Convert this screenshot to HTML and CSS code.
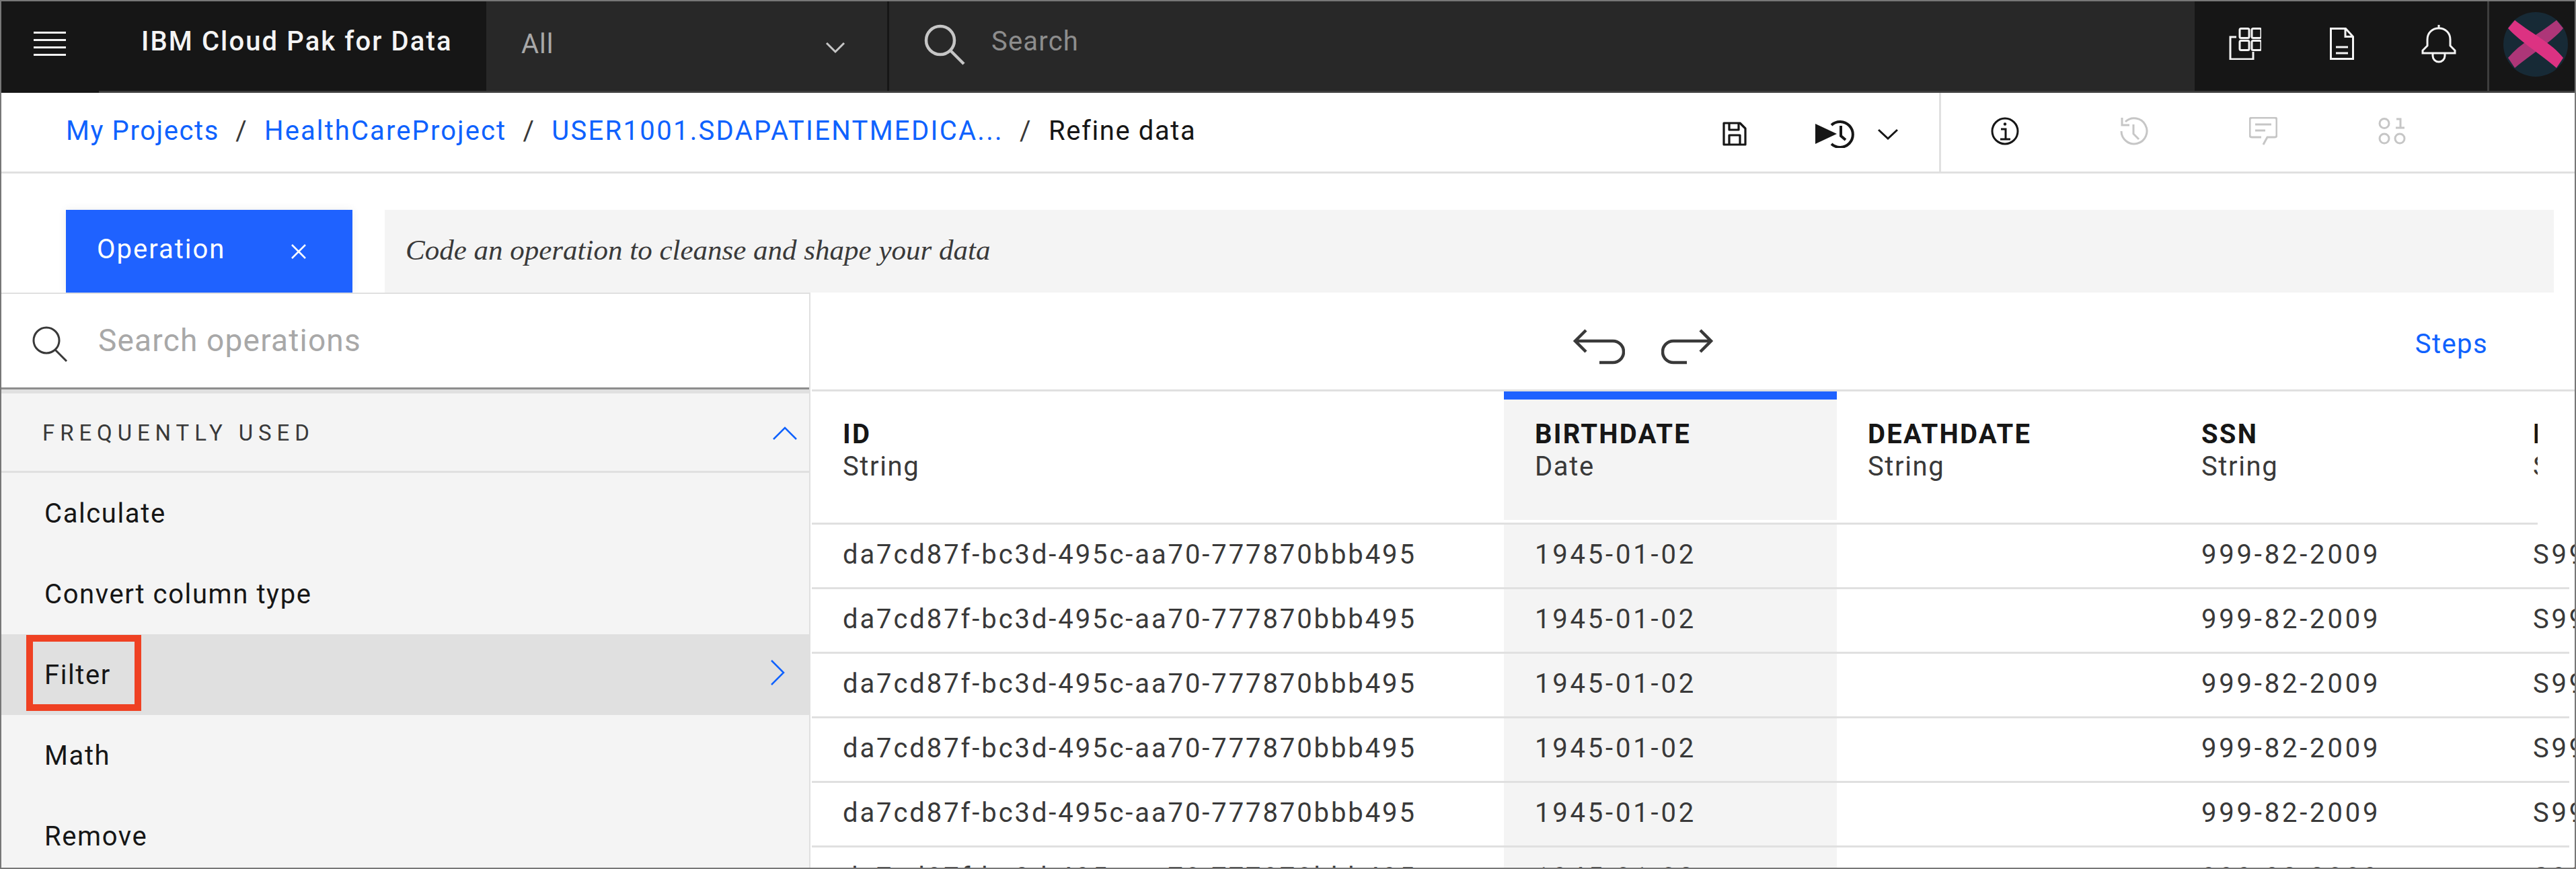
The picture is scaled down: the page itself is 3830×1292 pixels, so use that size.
FILE: index.html

```html
<!DOCTYPE html>
<html lang="en">
<head>
  <meta charset="UTF-8">
  <title>Refine data - IBM Cloud Pak for Data</title>
  <link rel="stylesheet" href="styles.css">
</head>
<body>
<div class="page">

  <header class="topbar">
    <div class="menu-cell">
      <div class="hamburger"><span></span><span></span><span></span><span></span></div>
    </div>
    <div class="brand">IBM Cloud Pak for Data</div>
    <div class="scope">
      <span class="scope-label">All</span>
      <svg class="scope-chevron" width="30" height="18" viewBox="0 0 30 18"><path d="M2 2l13 13L28 2" fill="none" stroke="#c6c6c6" stroke-width="3"/></svg>
    </div>
    <div class="global-search">
      <svg width="62" height="62" viewBox="0 0 62 62"><circle cx="25" cy="25" r="21" fill="none" stroke="#c6c6c6" stroke-width="4.5"/><path d="M40 40l20 20" stroke="#c6c6c6" stroke-width="4.5"/></svg>
      <span class="global-search-text">Search</span>
    </div>
    <div class="tools">
      <svg class="tool-apps" width="48" height="48" viewBox="0 0 48 48" fill="none" stroke="#f4f4f4" stroke-width="3">
        <path d="M11 14H2v33h34v-11"/>
        <rect x="16" y="1.500" width="14" height="14" rx="2"/><rect x="34" y="1.500" width="14" height="14" rx="2"/>
        <rect x="16" y="19.500" width="14" height="14" rx="2"/><rect x="34" y="19.500" width="14" height="14" rx="2"/>
      </svg>
      <svg class="tool-doc" width="36" height="48" viewBox="0 0 36 48" fill="none" stroke="#f4f4f4" stroke-width="3">
        <path d="M1.500 1.500h22l11 12v33h-33zM23 2v11.500h11"/>
        <path d="M9 29h18M9 38h18"/>
      </svg>
      <svg class="tool-bell" width="52" height="57" viewBox="0 0 52 57" fill="none" stroke="#f4f4f4" stroke-width="3">
        <path d="M26 0v5"/>
        <path d="M2 42v-4l7-7V22c0-10 7-17 17-17s17 7 17 17v9l7 7v4z"/>
        <path d="M17 43v3c0 5 4 9 9 9s9-4 9-9v-3"/>
      </svg>
    </div>
    <div class="avatar-cell">
      <svg width="96" height="96" viewBox="0 0 96 96">
        <circle cx="48" cy="48" r="48" fill="#172a36"/>
        <path d="M79 12l10 12C72 44 50 56 17 83L7 68c18-22 44-34 72-56z" fill="#ad3678"/>
        <path d="M17 12L7 24c18 20 40 32 72 59l10-15C72 46 45 34 17 12z" fill="#dc3282"/>
      </svg>
    </div>
  </header>

  <nav class="crumbbar">
    <div class="crumbs">
      <a class="crumb crumb-first">My Projects</a><span class="crumb-sep">/</span>
      <a class="crumb">HealthCareProject</a><span class="crumb-sep">/</span>
      <a class="crumb crumb-long">USER1001.SDAPATIENTMEDICA...</a><span class="crumb-sep">/</span>
      <span class="crumb-current">Refine data</span>
    </div>
    <div class="crumb-actions">
      <svg width="36" height="36" viewBox="0 0 36 36" fill="none" stroke="#161616" stroke-width="3.200" stroke-linejoin="round">
        <path d="M2 2h24l8 8v24H2z"/>
        <path d="M10 2v10h14V2M10 34V20h16v14"/>
      </svg>
      <svg class="run-icon" width="62" height="42" viewBox="0 0 62 42">
        <path d="M0 6l32 15L0 36z" fill="#161616"/>
        <path d="M24 8a19 19 0 1 1 0 28" fill="none" stroke="#161616" stroke-width="4"/>
        <path d="M38 9v15l7 6" fill="none" stroke="#161616" stroke-width="4"/>
      </svg>
      <svg class="run-chevron" width="30" height="18" viewBox="0 0 30 18"><path d="M1 2l14 13L29 2" fill="none" stroke="#161616" stroke-width="3"/></svg>
    </div>
    <div class="crumb-panel">
      <svg width="42" height="42" viewBox="0 0 42 42" fill="none" stroke="#161616" stroke-width="3">
        <circle cx="21" cy="21" r="19"/>
        <circle cx="21" cy="10.500" r="2.200" fill="#161616" stroke="none"/>
        <path d="M15 18h7v14M14 33h15"/>
      </svg>
      <svg width="42" height="42" viewBox="0 0 42 42" fill="none" stroke="#c6c6c6" stroke-width="3">
        <path d="M8 7a19 19 0 1 1-6 14"/>
        <path d="M3 1v11h11"/>
        <path d="M20 11v14l8 8"/>
      </svg>
      <svg width="42" height="42" viewBox="0 0 42 42" fill="none" stroke="#c6c6c6" stroke-width="3">
        <path d="M18 30H4q-3 0-3-3V4q0-3 3-3h34q3 0 3 3v23q0 3-3 3H27l-6 11"/>
        <path d="M9 11h24M9 20h15"/>
      </svg>
      <svg width="42" height="42" viewBox="0 0 42 42" fill="none" stroke="#c6c6c6" stroke-width="3">
        <circle cx="9" cy="9.500" r="7"/>
        <path d="M27 3h6v13M26 16h13"/>
        <circle cx="9" cy="32" r="7"/>
        <circle cx="32" cy="32" r="7"/>
      </svg>
    </div>
  </nav>

  <section class="opbar">
    <div class="op-button">
      <span class="op-label">Operation</span>
      <svg width="24" height="24" viewBox="0 0 24 24"><path d="M2 2l20 20M22 2L2 22" stroke="#fff" stroke-width="2.500"/></svg>
    </div>
    <div class="op-code">Code an operation to cleanse and shape your data</div>
  </section>

  <main class="workspace">
    <aside class="ops-panel">
      <div class="ops-search">
        <svg width="54" height="54" viewBox="0 0 54 54"><circle cx="22" cy="22" r="19" fill="none" stroke="#393939" stroke-width="3"/><path d="M35 36l17 17" stroke="#393939" stroke-width="3"/></svg>
        <span class="ops-search-text">Search operations</span>
      </div>
      <div class="ops-heading">
        <span>FREQUENTLY USED</span>
        <svg width="36" height="22" viewBox="0 0 36 22"><path d="M1 20L18 3l17 17" fill="none" stroke="#0f62fe" stroke-width="2.500"/></svg>
      </div>
      <div class="ops-item">Calculate</div>
      <div class="ops-item">Convert column type</div>
      <div class="ops-item ops-item-active">
        <span class="ops-marker">Filter</span>
        <svg class="ops-arrow" width="22" height="38" viewBox="0 0 22 38"><path d="M2 1l18 18L2 37" fill="none" stroke="#0f62fe" stroke-width="2.500"/></svg>
      </div>
      <div class="ops-item">Math</div>
      <div class="ops-item">Remove</div>
    </aside>

    <div class="data-pane">
      <div class="data-toolbar">
        <svg width="78" height="54" viewBox="0 0 78 54" fill="none" stroke="#393939" stroke-width="4.500">
          <path d="M20 3L4 19l16 16"/>
          <path d="M4 19h56a15 15 0 0 1 0 32H40"/>
        </svg>
        <svg class="redo" width="78" height="54" viewBox="0 0 78 54" fill="none" stroke="#393939" stroke-width="4.500">
          <path d="M58 3l16 16-16 16"/>
          <path d="M74 19H18a15 15 0 0 0 0 32h20"/>
        </svg>
        <a class="steps">Steps</a>
      </div>

      <div class="data-head cols">
        <div class="head-cell"><b>ID</b><span>String</span></div>
        <div class="head-cell head-cell-selected"><b>BIRTHDATE</b><span>Date</span></div>
        <div class="head-cell"><b>DEATHDATE</b><span>String</span></div>
        <div class="head-cell"><b>SSN</b><span>String</span></div>
        <div class="head-cell"><b>DRIVERS</b><span>String</span></div>
      </div>

      <div class="data-row cols"><div class="id-cell">da7cd87f-bc3d-495c-aa70-777870bbb495</div><div class="selected">1945-01-02</div><div></div><div>999-82-2009</div><div>S99962402</div></div>
      <div class="data-row cols"><div class="id-cell">da7cd87f-bc3d-495c-aa70-777870bbb495</div><div class="selected">1945-01-02</div><div></div><div>999-82-2009</div><div>S99962402</div></div>
      <div class="data-row cols"><div class="id-cell">da7cd87f-bc3d-495c-aa70-777870bbb495</div><div class="selected">1945-01-02</div><div></div><div>999-82-2009</div><div>S99962402</div></div>
      <div class="data-row cols"><div class="id-cell">da7cd87f-bc3d-495c-aa70-777870bbb495</div><div class="selected">1945-01-02</div><div></div><div>999-82-2009</div><div>S99962402</div></div>
      <div class="data-row cols"><div class="id-cell">da7cd87f-bc3d-495c-aa70-777870bbb495</div><div class="selected">1945-01-02</div><div></div><div>999-82-2009</div><div>S99962402</div></div>
      <div class="data-row cols"><div class="id-cell">da7cd87f-bc3d-495c-aa70-777870bbb495</div><div class="selected">1945-01-02</div><div></div><div>999-82-2009</div><div>S99962402</div></div>
    </div>
  </main>

</div>
</body>
</html>
```

FILE: styles.css

```css
* {
  box-sizing: border-box;
}
body {
  margin: 0;
  font-family: Roboto, "Noto Sans", sans-serif;
  color: #161616;
  background-color: #ffffff;
}
svg {
  display: block;
  flex: none;
}
.page {
  width: 3830px;
  height: 1292px;
  overflow: hidden;
  border: 2px solid #777777;
  display: flex;
  flex-direction: column;
}

/* top bar */
.topbar {
  height: 136px;
  flex: none;
  display: flex;
  background-color: #282828;
  border-bottom: 3px solid #3d3d3d;
}
.menu-cell {
  width: 145px;
  flex: none;
  margin-bottom: -3px;
  padding: 45px 0 0 48px;
  background-color: #161616;
}
.hamburger {
  width: 48px;
  display: flex;
  flex-direction: column;
  gap: 8px;
}
.hamburger span {
  height: 3px;
  background-color: #f4f4f4;
}
.brand {
  width: 576px;
  flex: none;
  padding: 36px 0 0 63px;
  background-color: #161616;
  color: #f4f4f4;
  font-size: 40px;
  line-height: 48px;
  font-weight: 500;
  letter-spacing: 2.1px;
  white-space: nowrap;
}
.scope {
  width: 599px;
  flex: none;
  padding: 40px 62px 0 52px;
  display: flex;
  justify-content: space-between;
  border-right: 3px solid #161616;
}
.scope-label {
  color: #a8a8a8;
  font-size: 40px;
  line-height: 48px;
  letter-spacing: 1px;
}
.scope-chevron {
  margin-top: 20px;
}
.global-search {
  flex: 1;
  min-width: 0;
  padding: 33px 0 0 51px;
  display: flex;
}
.global-search-text {
  margin: 3px 0 0 39px;
  color: #8d8d8d;
  font-size: 40px;
  line-height: 48px;
  letter-spacing: 1.2px;
}
.tools {
  width: 435px;
  flex: none;
  padding: 39px 0 0 51px;
  display: flex;
  align-items: flex-start;
  background-color: #161616;
}
.tool-doc {
  margin-left: 102px;
}
.tool-bell {
  margin: -4px 0 0 100px;
}
.avatar-cell {
  width: 130px;
  flex: none;
  padding: 16px 0 0 21px;
  background-color: #161616;
  border-left: 3px solid #3d3d3d;
}

/* breadcrumb bar */
.crumbbar {
  height: 120px;
  flex: none;
  display: flex;
  border-bottom: 3px solid #e0e0e0;
}
.crumbs {
  width: 2559px;
  padding: 33px 0 0 96px;
  display: flex;
  font-size: 40px;
  line-height: 48px;
  letter-spacing: 2.1px;
  white-space: nowrap;
}
.crumb {
  color: #0f62fe;
}
.crumb-first {
  letter-spacing: 1.6px;
}
.crumb-long {
  letter-spacing: 2.3px;
}
.crumb-sep {
  width: 67px;
  text-align: center;
  color: #393939;
}
.crumb-current {
  letter-spacing: 1.6px;
  color: #161616;
}
.crumb-actions {
  width: 325px;
  padding-top: 43px;
  display: flex;
  align-items: flex-start;
  border-right: 3px solid #e0e0e0;
}
.run-icon {
  margin: -3px 0 0 102px;
}
.run-chevron {
  margin: 10px 0 0 31px;
}
.crumb-panel {
  flex: 1;
  padding: 36px 0 0 74px;
  display: flex;
  align-items: flex-start;
  gap: 150px;
}

/* operation row */
.opbar {
  height: 177px;
  flex: none;
  padding: 54px 31px 0 96px;
  display: flex;
  gap: 48px;
}
.op-button {
  width: 426px;
  padding: 35px 68px 0 46px;
  display: flex;
  justify-content: space-between;
  background-color: #1f62ff;
  box-shadow: 0 0 12px rgba(0, 0, 0, 0.08);
  color: #ffffff;
  font-size: 40px;
  line-height: 48px;
  letter-spacing: 2px;
}
.op-button svg {
  margin-top: 15px;
}
.op-code {
  flex: 1;
  padding: 34px 0 0 31px;
  background-color: #f4f4f4;
  color: #393939;
  font-family: "Liberation Serif", serif;
  font-style: italic;
  font-size: 43px;
  line-height: 52px;
}

/* left panel */
.workspace {
  flex: 1;
  min-height: 0;
  display: flex;
}
.ops-panel {
  width: 1203px;
  flex: none;
  background-color: #f4f4f4;
  border-top: 2px solid #e0e0e0;
  border-right: 2px solid #e0e0e0;
}
.ops-search {
  height: 142px;
  padding: 47px 0 0 45px;
  display: flex;
  background-color: #ffffff;
  border-bottom: 3px solid #8d8d8d;
}
.ops-search-text {
  margin: -6px 0 0 45px;
  color: #a8a8a8;
  font-size: 46px;
  line-height: 56px;
  letter-spacing: 1.2px;
}
.ops-heading {
  height: 124px;
  padding: 2px 18px 0 61px;
  display: flex;
  align-items: center;
  justify-content: space-between;
  border-top: 6px solid #e0e0e0;
  border-bottom: 3px solid #e0e0e0;
  color: #393939;
  font-size: 33px;
  letter-spacing: 7.9px;
}
.ops-item {
  height: 120px;
  padding: 0 36px 0 64px;
  display: flex;
  align-items: center;
  justify-content: space-between;
  font-size: 40px;
  letter-spacing: 1.6px;
}
.ops-item-active {
  background-color: #e0e0e0;
}
.ops-arrow {
  margin-top: -6px;
}
.ops-marker {
  position: relative;
}
.ops-marker::before {
  content: "";
  position: absolute;
  box-sizing: border-box;
  left: -27px;
  top: -36px;
  width: 171px;
  height: 113px;
  border: 10px solid #ef4123;
}

/* data table */
.data-pane {
  flex: 1;
  min-width: 0;
  margin-left: 2px;
  overflow: hidden;
}
.data-toolbar {
  height: 147px;
  padding: 53px 129px 0 1131px;
  display: flex;
  align-items: flex-start;
  border-bottom: 3px solid #e0e0e0;
}
.redo {
  margin-left: 54px;
}
.steps {
  margin-left: auto;
  color: #0f62fe;
  font-size: 40px;
  line-height: 48px;
  letter-spacing: 1.4px;
}
.cols {
  display: grid;
  grid-template-columns: 1029px 495px 496px 493px 1fr;
}
.data-head {
  width: 2566px;
  height: 198px;
  overflow: hidden;
  border-bottom: 3px solid #e0e0e0;
}
.head-cell {
  height: 191px;
  padding: 40px 0 0 46px;
  font-size: 40px;
  line-height: 48px;
  white-space: nowrap;
}
.head-cell b {
  display: block;
  font-weight: 700;
  letter-spacing: 2.2px;
  color: #161616;
}
.head-cell span {
  display: block;
  letter-spacing: 1.6px;
  color: #393939;
}
.head-cell-selected {
  padding-top: 28px;
  background-color: #f4f4f4;
  border-top: 12px solid #1f62ff;
}
.data-row {
  width: 2613px;
  height: 96px;
  flex: none;
  border-bottom: 3px solid #e0e0e0;
  color: #393939;
  font-size: 40px;
  line-height: 90px;
  letter-spacing: 3.8px;
  white-space: nowrap;
}
.data-row > div {
  padding-left: 46px;
}
.data-row .id-cell {
  letter-spacing: 2.9px;
}
.data-row .selected {
  background-color: #f4f4f4;
}
```
